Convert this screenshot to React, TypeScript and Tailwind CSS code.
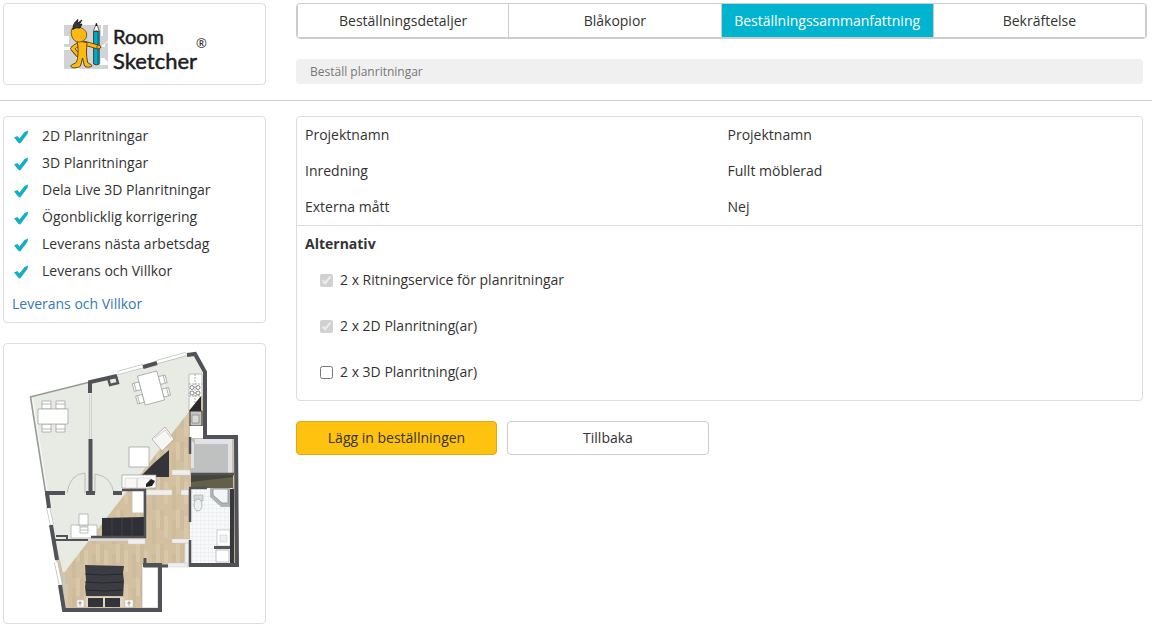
import React, { useState } from 'react';
import clsx from 'clsx';

const steps = ['Beställningsdetaljer', 'Blåkopior', 'Beställningssammanfattning', 'Bekräftelse'];

const features = [
  '2D Planritningar',
  '3D Planritningar',
  'Dela Live 3D Planritningar',
  'Ögonblicklig korrigering',
  'Leverans nästa arbetsdag',
  'Leverans och Villkor',
];

const details = [
  { label: 'Projektnamn', value: 'Projektnamn' },
  { label: 'Inredning', value: 'Fullt möblerad' },
  { label: 'Externa mått', value: 'Nej' },
];

const options = [
  { id: 'service', label: '2 x Ritningservice för planritningar', included: true },
  { id: 'plan-2d', label: '2 x 2D Planritning(ar)', included: true },
  { id: 'plan-3d', label: '2 x 3D Planritning(ar)', included: false },
];

const CheckMark = () => (
  <svg viewBox="0 0 14 14" className="mt-[2px] size-[14px] shrink-0" aria-hidden="true">
    <path d="M0 7.6 3.4 6 5.4 8.4 10.6 2 14 .4 13.6 3.8 6.2 13.4 4.6 13Z" fill="#12b0c8" />
  </svg>
);

const Logo = () => (
  <svg viewBox="59 14 152 60" className="h-[60px] w-[152px]" role="img" aria-label="Room Sketcher">
    <path d="M64 25h44v44H64z" fill="#d2d3d5" />
    <path d="M64 36h5v8h-5M64 47h13v3H64M101 25h2v11h-2M100 47h5v-4h3v-2M101 58h3l4 4v3h-8M76 50h3v19h-3" fill="#fff" />
    {/* Pencil */}
    <path d="M93.600 31.500h5.600V64q-2.800 1.800-5.600 0z" fill="#05a9bd" stroke="#1c2a30" strokeWidth=".8" />
    <path d="M97.200 32h1.800v32h-1.800z" fill="#087c92" />
    <path d="m93.400 31.500 3-8.500 3 8.500q-3-1.500-6 0z" fill="#fff" stroke="#333" strokeWidth=".7" />
    <path d="m95.400 26 1-3 1 3z" fill="#111" />
    {/* Mascot */}
    <g fill="none" strokeLinecap="round" strokeLinejoin="round">
      <path d="M80 43 72.500 48.500 78 55M84 43l14 4" stroke="#4a3510" strokeWidth="4.600" />
      <path d="M80 43 72.500 48.500 78 55M84 43l14 4" stroke="#fdb913" strokeWidth="3" />
      <path d="M77 41c2 8 1 16-.5 21-1 2-6 2-5.500 4.500.5 2 8 1.500 9.500-.5l2-8 2 8c.5 1.500 7 1.500 7.500 0 0-2-4-2-4.500-4-1.500-8-1-12-.5-19z" fill="#fdb913" stroke="#4a3510" strokeWidth=".9" />
      <path d="M72 29c5-4 13-1 14.500 4 1 6-3 9-8 9-6 0-9-9-6.500-13z" fill="#fdb913" stroke="#5c420f" strokeWidth=".8" />
      <path d="M73 29c0-5 2-7 5-9.500l-1 4 5-3.500-3 5 3-1-2 4q-4-1-7 1z" fill="#3a3a3a" stroke="#161616" strokeWidth=".9" />
      <ellipse cx="98.800" cy="47" rx="2" ry="1.800" fill="#fdb913" stroke="#4a3510" strokeWidth=".7" />
    </g>
    <g fill="#1d1d1f" stroke="#1d1d1f" strokeWidth=".5" fontFamily="Lato, sans-serif">
      <text x="113" y="44" fontSize="20">Room</text>
      <text x="113" y="69" fontSize="22">Sketcher</text>
    </g>
    <text x="196" y="48" fontSize="13" fill="#1d1d1f" fontFamily="'Open Sans', sans-serif">®</text>
  </svg>
);

const FloorPlan = () => (
  <svg viewBox="4 344 261 279" className="block w-full" role="img" aria-label="Planritning">
    <defs>
      <pattern id="wood" width="20" height="34" patternUnits="userSpaceOnUse">
        <path d="M0 0h20v34H0z" fill="#d3c0a0" />
        <path d="M0 0h4v20H0zM12 10h4v24h-4z" fill="#cebb99" />
        <path d="M4 6h4v22H4zM16 0h4v18h-4z" fill="#d8c7a9" />
      </pattern>
      <pattern id="tiles" width="4" height="4" patternUnits="userSpaceOnUse">
        <path d="M0 0h4v4H0z" fill="#f8f9f9" />
        <path d="M4 0H0v4" fill="none" stroke="#dfe3e4" strokeWidth=".7" />
      </pattern>
    </defs>

    {/* Floors */}
    <path d="M45 492 92 381 195 353 205 371V436H236L238 565H160V610H64z" fill="url(#wood)" />
    <path d="m30 397 62-16 103-27 10 17v25h-4L63 574 45 492z" fill="#e8ebe3" />

    {/* Balcony edge */}
    <path d="m30.500 397 15 95M30 397l60-15" fill="none" stroke="#969b99" strokeWidth="1.600" />
    <path d="m32.500 398 14.500 92" stroke="#fff" strokeWidth=".7" />

    {/* Kitchen */}
    <path d="M189 374h13v22l-13 15z" fill="#fff" stroke="#999" strokeWidth=".6" />
    <path d="M189 384h13M189 396h12M195 374v34" stroke="#777" strokeWidth=".6" strokeDasharray="2 1" />
    <g fill="none" stroke="#555" strokeWidth=".7">
      <circle cx="192" cy="387.500" r="2" />
      <circle cx="198" cy="387.500" r="2" />
      <circle cx="192" cy="393" r="2" />
      <circle cx="198" cy="393" r="2" />
    </g>
    <path d="m201 396-12 15h12z" fill="#29292b" />
    <path d="M190 411h12v15h-12z" fill="#c4c4c1" stroke="#303133" strokeWidth="1" />
    <path d="M192 415h7v8h-7z" fill="#d9dad8" stroke="#777" strokeWidth=".6" />
    <path d="M190 426h13v12h-13z" fill="#fff" />

    {/* Storage room and hall cabinet */}
    <path d="M191 439h42v34h-42z" fill="#bec1c0" />
    <path d="M191 439h41v34h-4v-29h-33v-5M191 440v28h3v-25" fill="#e1e3e7" />
    <path d="M191 474h42v14h-42z" fill="#625f4b" />
    <path d="m191 475 42-1v3l-42 5z" fill="#45443a" />

    {/* Bathroom */}
    <path d="M190 488h42v77h-42z" fill="url(#tiles)" />
    <path d="M210 488h20v19h-9l-11-10z" fill="#afb4b6" />
    <path d="M213 489h15v14h-6l-9-8z" fill="#f4f5f6" stroke="#8b9195" strokeWidth=".8" />
    <path d="M194 495h9v6h-9z" fill="#d4d7d8" stroke="#a3a8a9" strokeWidth=".6" />
    <ellipse cx="198" cy="505" rx="4" ry="6" fill="#eef0f0" stroke="#a3a8a9" strokeWidth=".8" />
    <path d="M217 530h13v16h-13z" fill="#fff" stroke="#bbc0c1" strokeWidth=".7" />
    <path d="M220 535h7v7h-7z" fill="#eef0f0" stroke="#ccc" strokeWidth=".6" />
    <path d="M216 550h13v12h-13z" fill="#fff" stroke="#aeb2b5" strokeWidth=".8" />
    <path d="M214 546h16v3h-16z" fill="#54565a" />
    <path d="M230 489h4v74h-4z" fill="#37383c" />

    {/* Living room */}
    <path d="m154 463 15-13v27h-29z" fill="#34353b" />
    <path d="M129 447h20v20h-20zM122 475h34v13h-34z" fill="#fff" stroke="#9a9a9a" strokeWidth=".7" />
    <path d="M125 478h12v10h-12zM137 478h13v10h-13z" fill="#f9f7f4" stroke="#c9c9c9" strokeWidth=".6" />
    <path d="m146 484 5-5 4 2-3 5-6 1z" fill="#202124" />
    <path d="m152 439 13-12 9 12-12 12z" fill="#f7f6f4" stroke="#aaa" strokeWidth=".8" />
    <path d="m155 438 10-8M165 430l6 8" stroke="#c7c7c7" strokeWidth=".8" />

    {/* Dining tables */}
    <g fill="#fff" stroke="#999c9a" strokeWidth=".7">
      <path d="M42 401h9v8h-9zM56 401h9v8h-9zM42 424h9v8h-9zM56 424h9v8h-9z" />
      <path d="M42 404h9M56 404h9M42 429h9M56 429h9" />
      <path d="M38 409h30v15H38z" />
      <g transform="rotate(-15 151 388)">
        <path d="M134 379h7v8h-7zM134 392h7v8h-7zM161 379h7v8h-7zM161 392h7v8h-7z" />
        <path d="M136 379v8M136 392v8M166 379v8M166 392v8" />
        <path d="M141 373h20v30h-20z" />
      </g>
    </g>

    {/* Study */}
    <g fill="#fff" stroke="#a2a5a3" strokeWidth=".7">
      <path d="M71 525h26v13H71zM79 514h9v12h-9z" />
      <path d="M80 527h8v6h-8zM80 530h8" />
    </g>
    <path d="M132 489h12v24h-12z" fill="#fff" stroke="#c5c3be" />
    <path d="m102 518 42-1v19h-42z" fill="#2e3036" />
    <path d="M112 518v18M122 518v18M132 518v18" stroke="#44464c" strokeWidth=".8" />
    <path d="M88 537h57v4H86z" fill="#dad8dc" />
    <path d="M64 572v35l4 2" fill="none" stroke="#c8c8c8" strokeWidth="2" />

    {/* Bedroom */}
    <path d="M86 597h38v10H86z" fill="#ddd6c6" />
    <path d="m85 565 39 1-1 7 1 8-1 15H86l-1-9 1-7z" fill="#3c3d43" />
    <path d="M88 598h15v9H88zM105 598h15v9h-15z" fill="#33343a" />
    <path d="M85 574q18 2 38 0M85 582q18 2 38 0M86 590q18 2 37 0" fill="none" stroke="#222329" strokeWidth=".8" />
    <path d="M77 600h7v7h-7zM125 600h8v7h-8z" fill="#fff" stroke="#c8c3b9" strokeWidth=".6" />
    <path d="M80 601v5M129 601v5M78 603h4M127 603h4" stroke="#777" strokeWidth=".7" />
    <path d="M142 564h16v44h-16z" fill="#fff" stroke="#aaa" strokeWidth=".6" />

    {/* Door swings */}
    <g fill="none" stroke="#a5aaa8" strokeWidth=".7">
      <path d="M67 493q3-19 18-20v20M95 474q16 2 19 19M95 474v19" />
      <path d="M89.500 394v45M91.500 394v45" stroke="#c3c7c5" />
    </g>

    {/* Light inner walls */}
    <path d="M145 490h27v5h-27zM172 470h18v5h-18zM181 490h8v5h-8zM172 539h18v4h-18zM185 543h4v23h-4zM128 539h17v5h-17zM168 563h20v4h-20z" fill="#f0eff0" stroke="#d1cdca" strokeWidth=".5" />

    {/* Windows */}
    <path d="m118 373 25-7M157 362l29-8M48 507l4 18M56 562l5 24" stroke="#bfc2c2" strokeWidth="4" />
    <path d="m118 373 25-7M157 362l29-8M48 507l4 18M56 562l5 24" stroke="#fff" strokeWidth="2.500" />

    {/* Walls */}
    <g fill="none" stroke="#505257" strokeWidth="4">
      <path d="M90 393V382l27-6M143 367l14-4M187 355l8-1 10 18v65h31l1 128h-48" />
      <path d="m108 378 2 7 8-2-2-7" strokeWidth="2.500" />
      <path d="M90.500 439v54M45 493h20M47 493l2 15M51 525l6 35M86 493h9M113 493h9" />
      <path d="M60 585l4 25h96v-45h-17" />
      <path d="M54 540h34M56 536h11v5" strokeWidth="2" />
      <path d="M122 490h23v47h-54M190 489v33M190 540v26M189 488h18M190 437v17M191 474h43" strokeWidth="2.500" />
      <path d="M145 558v8h23" strokeWidth="3" />
    </g>
  </svg>
);

export default function App() {
  const [extra3d, setExtra3d] = useState(false);

  return (
    <div className="min-h-screen bg-white pb-1 font-['Open_Sans',sans-serif] text-sm leading-5 text-[#333]">
      <header className="grid grid-cols-[263px_1fr] items-start gap-[30px] border-b border-[#ccc] pt-[3px] pr-[5px] pb-[15px] pl-[3px]">
        <a href="#" className="flex h-[82px] items-center justify-center rounded border border-[#ddd]">
          <Logo />
        </a>
        <div>
          <nav className="grid h-9 grid-cols-4 overflow-hidden rounded border border-[#ccc]">
            {steps.map((step, i) => (
              <button
                key={step}
                type="button"
                aria-current={i === 2 ? 'step' : undefined}
                className={clsx(
                  'border-r border-b border-[#ccc]',
                  i === 2 && 'bg-[#00b4cf] text-white',
                  i === 0 && 'border-l',
                )}
              >
                {step}
              </button>
            ))}
          </nav>
          <div className="mt-5 mr-1 rounded bg-[#f0f0f0] px-[14px] text-xs leading-[25px] text-[#777]">
            Beställ planritningar
          </div>
        </div>
      </header>

      <div className="grid grid-cols-[263px_1fr] items-start gap-[30px] pt-[15px] pr-[9px] pl-[3px]">
        <aside className="flex flex-col gap-5">
          <section className="rounded border border-[#ddd] px-2 pt-[5px] pb-2">
            <ul>
              {features.map((feature) => (
                <li key={feature} className="flex items-center gap-[14px] pl-[2px] leading-[27px]">
                  <CheckMark />
                  {feature}
                </li>
              ))}
            </ul>
            <a href="#" className="mt-[10px] block text-[#337ab7]">Leverans och Villkor</a>
          </section>
          <section className="rounded border border-[#ddd]">
            <FloorPlan />
          </section>
        </aside>

        <main>
          <section className="rounded border border-[#ddd]">
            <dl className="border-b border-[#ddd]">
              {details.map(({ label, value }) => (
                <div key={label} className="grid grid-cols-2 leading-9">
                  <dt className="px-2">{label}</dt>
                  <dd className="px-2">{value}</dd>
                </div>
              ))}
            </dl>
            <h2 className="px-2 leading-9 font-bold">Alternativ</h2>
            <ul className="px-[23px]">
              {options.map(({ id, label, included }) => (
                <li key={id} className="flex items-center gap-[7px] pb-[10px] leading-9">
                  <input
                    id={id}
                    type="checkbox"
                    className="size-[13px]"
                    checked={included || extra3d}
                    disabled={included}
                    onChange={(e) => setExtra3d(e.target.checked)}
                  />
                  <label htmlFor={id}>{label}</label>
                </li>
              ))}
            </ul>
          </section>

          <div className="mt-5 flex gap-[10px]">
            <button type="button" className="h-[34px] w-[201px] rounded border border-[#dba81d] bg-[#ffc20e]">
              Lägg in beställningen
            </button>
            <button type="button" className="h-[34px] w-[202px] rounded border border-[#ccc] bg-white">
              Tillbaka
            </button>
          </div>
        </main>
      </div>
    </div>
  );
}
